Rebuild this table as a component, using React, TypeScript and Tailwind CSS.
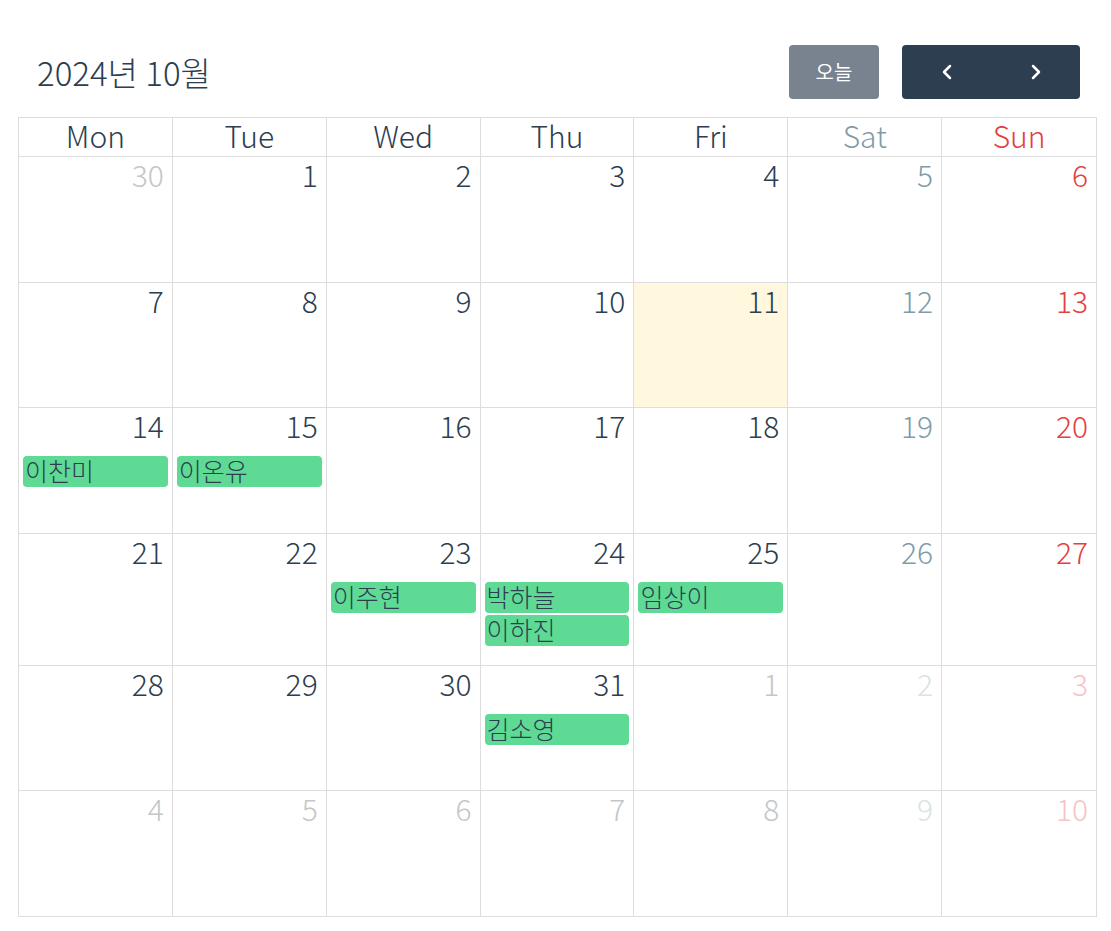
import { ChevronLeft, ChevronRight } from 'lucide-react'

type Day = { d: number; cur: boolean; events?: string[]; today?: boolean }

const weekdays = ['Mon', 'Tue', 'Wed', 'Thu', 'Fri', 'Sat', 'Sun']

const events: Record<number, string[]> = {
  14: ['이찬미'],
  15: ['이온유'],
  23: ['이주현'],
  24: ['박하늘', '이하진'],
  25: ['임상이'],
  31: ['김소영'],
}

function buildWeeks(): Day[][] {
  const days: Day[] = [{ d: 30, cur: false }]
  for (let i = 1; i <= 31; i++) days.push({ d: i, cur: true, events: events[i], today: i === 11 })
  for (let i = 1; i <= 10; i++) days.push({ d: i, cur: false })
  const weeks: Day[][] = []
  for (let i = 0; i < days.length; i += 7) weeks.push(days.slice(i, i + 7))
  return weeks
}

function numColor(col: number, cur: boolean) {
  if (col === 5) return cur ? 'text-[#7f9ca9]' : 'text-[#d9e2e6]'
  if (col === 6) return cur ? 'text-[#e53e3e]' : 'text-[#f6c4c4]'
  return cur ? 'text-[#2c3e50]' : 'text-[#c4c6c8]'
}

function headColor(col: number) {
  if (col === 5) return 'text-[#7f9ca9]'
  if (col === 6) return 'text-[#e53e3e]'
  return 'text-[#2c3e50]'
}

export default function App() {
  const weeks = buildWeeks()

  return (
    <div className="min-h-[931px] bg-white pt-[45px] pl-[18px] pr-[14px] font-['Noto_Sans_CJK_KR','Noto_Sans',sans-serif] font-light text-[#2c3e50]">
      <div className="flex items-center justify-between pl-[19px] pr-[17px] mb-[18px]">
        <h2 className="text-[33px] leading-none font-light">2024년 10월</h2>
        <div className="flex items-center gap-[23px]">
          <button className="w-[90px] h-[54px] rounded-[4px] bg-[#79828f] text-white text-[20px] font-normal">오늘</button>
          <div className="flex h-[54px] rounded-[4px] bg-[#2c3e50] overflow-hidden">
            <button className="w-[89px] flex items-center justify-center text-white">
              <ChevronLeft size={24} strokeWidth={2.5} />
            </button>
            <button className="w-[89px] flex items-center justify-center text-white">
              <ChevronRight size={24} strokeWidth={2.5} />
            </button>
          </div>
        </div>
      </div>

      <div className="border border-[#dddddd]">
        <div className="grid grid-cols-7">
          {weekdays.map((w, i) => (
            <div
              key={w}
              className={`h-[39px] flex items-center justify-center pb-[4px] text-[30px] leading-none border-b border-[#dddddd] ${i < 6 ? 'border-r' : ''} ${headColor(i)}`}
            >
              {w}
            </div>
          ))}
        </div>
        {weeks.map((week, wi) => (
          <div key={wi} className={`grid grid-cols-7 ${wi < weeks.length - 1 ? 'border-b border-[#dddddd]' : ''}`}>
            {week.map((day, ci) => (
              <div
                key={ci}
                className={`min-h-[124.6px] flex flex-col pb-[19px] ${ci < 6 ? 'border-r border-[#dddddd]' : ''} ${day.today ? 'bg-[#fff8de]' : ''}`}
              >
                <div className={`h-[48px] pt-[1px] pr-[8px] text-right text-[30px] leading-[32px] ${numColor(ci, day.cur)}`}>
                  {day.d}
                </div>
                <div className="flex flex-col gap-[2px] px-[4px]">
                  {day.events?.map((e) => (
                    <div
                      key={e}
                      className="h-[31px] rounded-[4px] bg-[#5eda94] text-[#2c3e50] text-[25px] font-light leading-[29px] px-[2px]"
                    >
                      {e}
                    </div>
                  ))}
                </div>
              </div>
            ))}
          </div>
        ))}
      </div>
    </div>
  )
}
